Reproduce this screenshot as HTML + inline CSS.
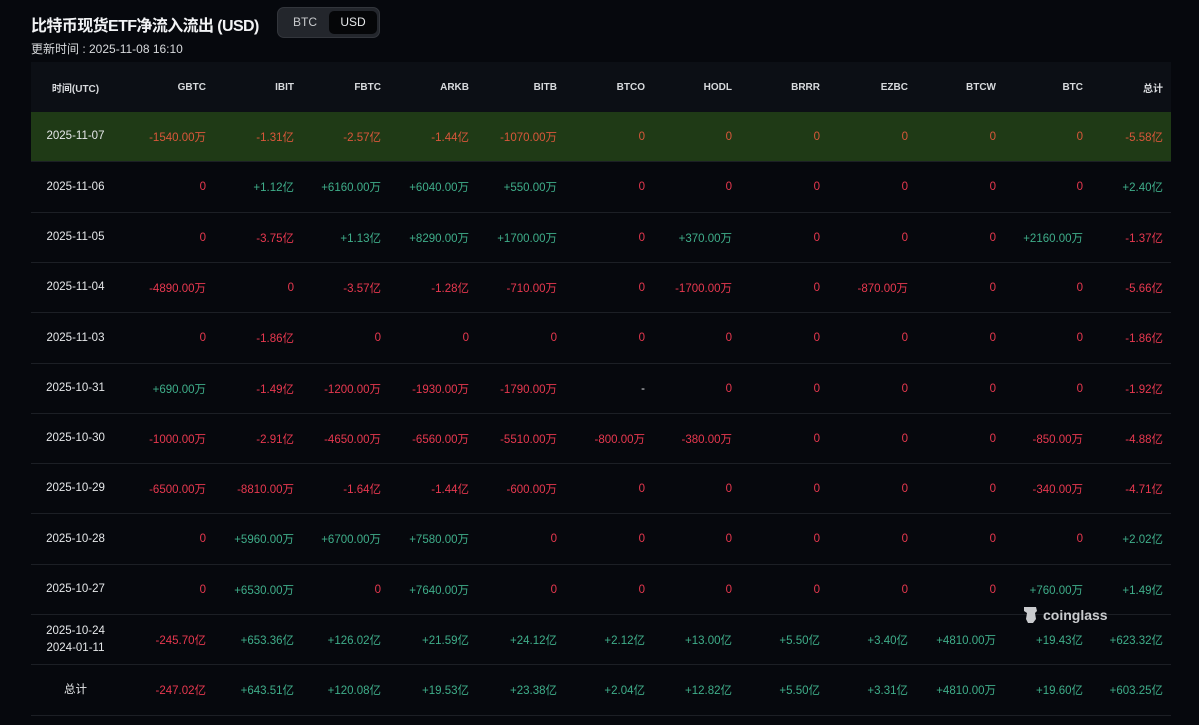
<!DOCTYPE html>
<html><head><meta charset="utf-8"><style>
body{margin:0;width:1199px;height:725px;background:#06080d;font-family:"Liberation Sans","Noto Sans CJK SC",sans-serif;color:#e6e8ea;overflow:hidden;position:relative}
.t{position:absolute;left:31px;top:12px;font-size:16px;font-weight:bold;color:#f2f3f5;letter-spacing:-0.6px;white-space:nowrap}
.u{position:absolute;left:31px;top:40px;font-size:12px;color:#d8dadd}
.tog{position:absolute;left:277px;top:7px;width:103px;height:31px;border-radius:7px;background:#23262c;border:1px solid #33363c;box-sizing:border-box}
.tog span{position:absolute;top:3px;height:23px;line-height:23px;font-size:12px;text-align:center;border-radius:5px}
.row{position:absolute;left:31px;width:1140px;height:50px;display:flex;align-items:center;font-size:11.5px;border-bottom:1px solid #1c1f25;box-sizing:border-box}
.row div{text-align:right}
.row div:first-child{text-align:center}
.r{color:#e8384f}.g{color:#3fae8a}.w{color:#e6e8ea}
.hd{background:#0c0f15;font-weight:bold;font-size:10px;color:#d8dadd;border:none}
.gr{background:#1f3a16}.gr .r{color:#d9573a}
</style></head><body>
<div class="t">比特币现货ETF净流入流出 (USD)</div>
<div class="tog"><span style="left:4px;width:46px;color:#c8cacd">BTC</span><span style="left:51px;width:48px;background:#050608;color:#e6e8ea">USD</span></div>
<div class="u">更新时间 : 2025-11-08 16:10</div>
<div id="tb"></div>
<div style="position:absolute;left:1021px;top:605px;font-size:14px;font-weight:bold;color:#c9cbce;display:flex;align-items:center;gap:4px"><svg width="18" height="20" viewBox="0 0 18 20"><path d="M3 2h12l1 4-2 2 1 6-3 4H7l-2-4 1-6-3-2z" fill="#c9cbce"/></svg>coinglass</div>
<script>
const w=[89,86,88,87,88,88,88,87,88,88,88,87,80];
const H=["时间(UTC)","GBTC","IBIT","FBTC","ARKB","BITB","BTCO","HODL","BRRR","EZBC","BTCW","BTC","总计"];
const D=[
["2025-11-07","-1540.00万","-1.31亿","-2.57亿","-1.44亿","-1070.00万","0","0","0","0","0","0","-5.58亿"],
["2025-11-06","0","+1.12亿","+6160.00万","+6040.00万","+550.00万","0","0","0","0","0","0","+2.40亿"],
["2025-11-05","0","-3.75亿","+1.13亿","+8290.00万","+1700.00万","0","+370.00万","0","0","0","+2160.00万","-1.37亿"],
["2025-11-04","-4890.00万","0","-3.57亿","-1.28亿","-710.00万","0","-1700.00万","0","-870.00万","0","0","-5.66亿"],
["2025-11-03","0","-1.86亿","0","0","0","0","0","0","0","0","0","-1.86亿"],
["2025-10-31","+690.00万","-1.49亿","-1200.00万","-1930.00万","-1790.00万","-","0","0","0","0","0","-1.92亿"],
["2025-10-30","-1000.00万","-2.91亿","-4650.00万","-6560.00万","-5510.00万","-800.00万","-380.00万","0","0","0","-850.00万","-4.88亿"],
["2025-10-29","-6500.00万","-8810.00万","-1.64亿","-1.44亿","-600.00万","0","0","0","0","0","-340.00万","-4.71亿"],
["2025-10-28","0","+5960.00万","+6700.00万","+7580.00万","0","0","0","0","0","0","0","+2.02亿"],
["2025-10-27","0","+6530.00万","0","+7640.00万","0","0","0","0","0","0","+760.00万","+1.49亿"],
["2025-10-24<br>2024-01-11","-245.70亿","+653.36亿","+126.02亿","+21.59亿","+24.12亿","+2.12亿","+13.00亿","+5.50亿","+3.40亿","+4810.00万","+19.43亿","+623.32亿"],
["总计","-247.02亿","+643.51亿","+120.08亿","+19.53亿","+23.38亿","+2.04亿","+12.82亿","+5.50亿","+3.31亿","+4810.00万","+19.60亿","+603.25亿"]];
let h='<div class="row hd" style="top:62px">'+H.map((x,i)=>`<div style="width:${w[i]}px">${x}</div>`).join('')+'</div>';
D.forEach((r,j)=>{const top=Math.round(112+j*50.3);
h+=`<div class="row${j==0?' gr':''}" style="top:${top}px;height:${Math.round(112+(j+1)*50.3)-top}px">`+r.map((x,i)=>{let c=i==0?'w':x[0]=='+'?'g':x=='-'?'w':'r';return `<div class="${c}" style="width:${w[i]}px;${i==0?'line-height:17px':''}">${x}</div>`}).join('')+'</div>';});
document.getElementById('tb').innerHTML=h;
</script>
</body></html>
